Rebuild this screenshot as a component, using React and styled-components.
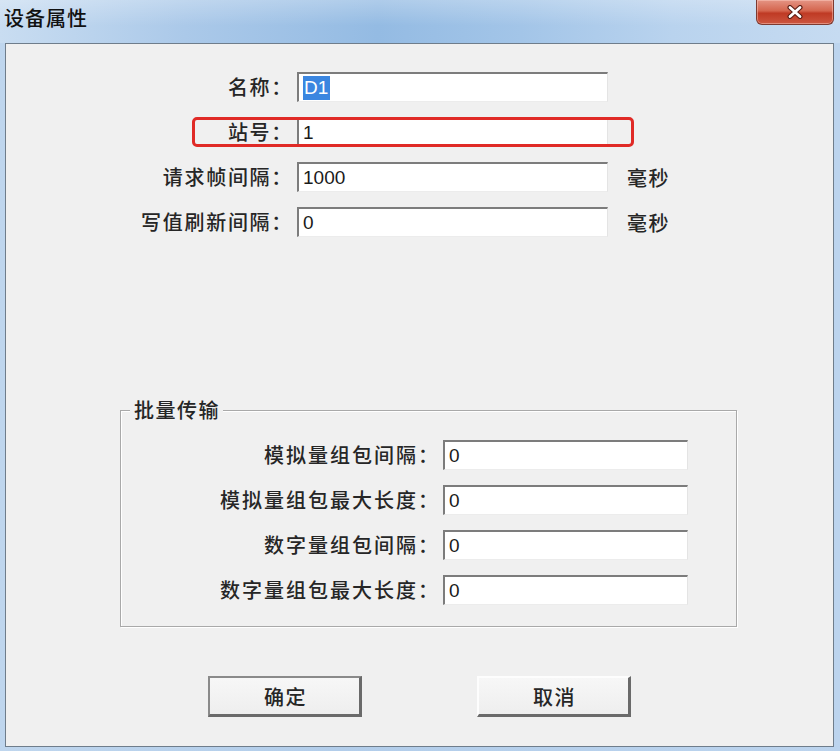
import React from "react";
import styled, { createGlobalStyle } from "styled-components";

const Global = createGlobalStyle`
  html, body { margin: 0; padding: 0; }
  body { width: 840px; height: 751px; overflow: hidden; background: #b9d2ec; }
`;

const CJK = `"Noto Sans CJK SC", "Noto Sans", sans-serif`;

const Window = styled.div`
  width: 840px;
  height: 751px;
  display: flex;
  flex-direction: column;
  background: linear-gradient(90deg, #bfd6ee 0%, #b2cdea 40%, #bcd4ee 100%);
  font-family: ${CJK};
  color: #262626;
`;

const TitleBar = styled.div`
  height: 43px;
  flex-shrink: 0;
  display: flex;
  justify-content: space-between;
  align-items: flex-start;
  background:
    linear-gradient(180deg, rgba(255,255,255,0.25) 0%, rgba(255,255,255,0) 60%),
    linear-gradient(90deg, #c9ddf1 0%, #abc9e9 22%, #94bbe3 45%, #a3c5e8 62%, #b9d3ee 80%, #c6dbf1 100%);
`;

const Title = styled.div`
  padding-left: 4px;
  line-height: 36px;
  font-size: 20px;
  letter-spacing: 1px;
  font-weight: 500;
  color: #111;
`;

const CloseButton = styled.div`
  width: 78px;
  height: 25px;
  margin-right: 6px;
  box-sizing: border-box;
  border: 1px solid #7d3a30;
  border-top: none;
  border-radius: 0 0 6px 6px;
  background: linear-gradient(180deg, #e49484 0%, #d4654e 45%, #bf3a24 55%, #cc5640 100%);
  display: flex;
  align-items: center;
  justify-content: center;
  box-shadow: inset 0 0 0 1px rgba(255, 210, 200, 0.45);
`;

const Client = styled.div`
  flex: 1;
  margin: 0 6px 4px 5px;
  border: 1px solid #6f7d8b;
  background: #f0f0f0;
  display: flex;
  flex-direction: column;
  padding-top: 28px;
`;

const Form = styled.div`
  display: flex;
  flex-direction: column;
  gap: ${(p) => p.$gap || 15}px;
`;

const Row = styled.div`
  position: relative;
  display: flex;
  align-items: center;
  height: 30px;
`;

const Label = styled.div`
  width: ${(p) => p.$w}px;
  flex-shrink: 0;
  text-align: right;
  font-size: 20px;
  letter-spacing: ${(p) => p.$ls || 1.7}px;
  font-weight: 500;
  white-space: nowrap;
  line-height: 30px;
`;

const Field = styled.div`
  width: ${(p) => p.$w}px;
  height: 30px;
  margin-left: ${(p) => p.$ml || 7}px;
  flex-shrink: 0;
  box-sizing: border-box;
  background: #fff;
  border-top: 2px solid #7c7c7c;
  border-left: 2px solid #7c7c7c;
  border-right: 1px solid #e4e4e4;
  border-bottom: 1px solid #ececec;
  padding-left: 4px;
  display: flex;
  align-items: center;
  font-family: "Liberation Sans", Arial, sans-serif;
  font-size: 19px;
  color: #1a1a1a;
`;

const Selected = styled.span`
  background: #3b86e0;
  color: #fff;
  padding: 1px 2px 1px 1px;
  line-height: 22px;
`;

const Unit = styled.div`
  margin-left: 19px;
  font-size: 20px;
  letter-spacing: 1.5px;
  font-weight: 500;
`;

const Highlight = styled.div`
  position: absolute;
  left: 186px;
  top: 0;
  width: 442px;
  height: 30px;
  box-sizing: border-box;
  border: 3px solid #e02a26;
  border-radius: 5px;
  pointer-events: none;
`;

const GroupBox = styled.div`
  position: relative;
  margin: 173px 0 0 114px;
  width: 617px;
  height: 217px;
  box-sizing: border-box;
  border: 1px solid #a9a9a9;
  box-shadow: inset 1px 1px 0 #fff, 1px 1px 0 #fff;
  padding-top: 29px;
`;

const GroupTitle = styled.div`
  position: absolute;
  top: -15px;
  left: 9px;
  padding: 0 3px 0 4px;
  background: #f0f0f0;
  font-size: 20px;
  letter-spacing: 1.5px;
  font-weight: 500;
  line-height: 28px;
`;

const ButtonBar = styled.div`
  display: flex;
  gap: 115px;
  margin-top: 49px;
  padding-left: 202px;
`;

const Button = styled.div`
  width: 154px;
  height: 41px;
  box-sizing: border-box;
  display: flex;
  align-items: center;
  justify-content: center;
  background: linear-gradient(180deg, #f7f7f7 0%, #eeeeee 100%);
  border-top: ${(p) => (p.$default ? "2px solid #8a8a8a" : "2px solid #fdfdfd")};
  border-left: ${(p) => (p.$default ? "2px solid #8a8a8a" : "2px solid #fdfdfd")};
  border-right: 3px solid #6a6a6a;
  border-bottom: 3px solid #6a6a6a;
  font-size: 20px;
  letter-spacing: 1.5px;
  font-weight: 500;
  padding-left: 2px;
`;

const topRows = [
  { label: "名称：", value: "D1", selected: true },
  { label: "站号：", value: "1", highlight: true },
  { label: "请求帧间隔：", value: "1000", unit: "毫秒" },
  { label: "写值刷新间隔：", value: "0", unit: "毫秒" },
];

const groupRows = [
  { label: "模拟量组包间隔：", value: "0" },
  { label: "模拟量组包最大长度：", value: "0" },
  { label: "数字量组包间隔：", value: "0" },
  { label: "数字量组包最大长度：", value: "0" },
];

export default function App() {
  return (
    <>
      <Global />
      <Window>
        <TitleBar>
          <Title>设备属性</Title>
          <CloseButton>
            <svg width="16" height="14" viewBox="0 0 16 14">
              <path d="M3 2.5 L13 11.5 M13 2.5 L3 11.5" stroke="#5a1d14" strokeWidth="5" strokeLinecap="round" />
              <path d="M3 2.5 L13 11.5 M13 2.5 L3 11.5" stroke="#ffffff" strokeWidth="2.8" strokeLinecap="round" />
            </svg>
          </CloseButton>
        </TitleBar>
        <Client>
          <Form>
            {topRows.map((r) => (
              <Row key={r.label}>
                <Label $w={287}>{r.label}</Label>
                <Field $w={311} $ml={4}>
                  {r.selected ? <Selected>{r.value}</Selected> : r.value}
                </Field>
                {r.unit && <Unit>{r.unit}</Unit>}
                {r.highlight && <Highlight />}
              </Row>
            ))}
          </Form>
          <GroupBox>
            <GroupTitle>批量传输</GroupTitle>
            <Form $gap={15}>
              {groupRows.map((r) => (
                <Row key={r.label}>
                  <Label $w={319} $ls={2}>{r.label}</Label>
                  <Field $w={245} $ml={3}>{r.value}</Field>
                </Row>
              ))}
            </Form>
          </GroupBox>
          <ButtonBar>
            <Button $default>确定</Button>
            <Button>取消</Button>
          </ButtonBar>
        </Client>
      </Window>
    </>
  );
}
